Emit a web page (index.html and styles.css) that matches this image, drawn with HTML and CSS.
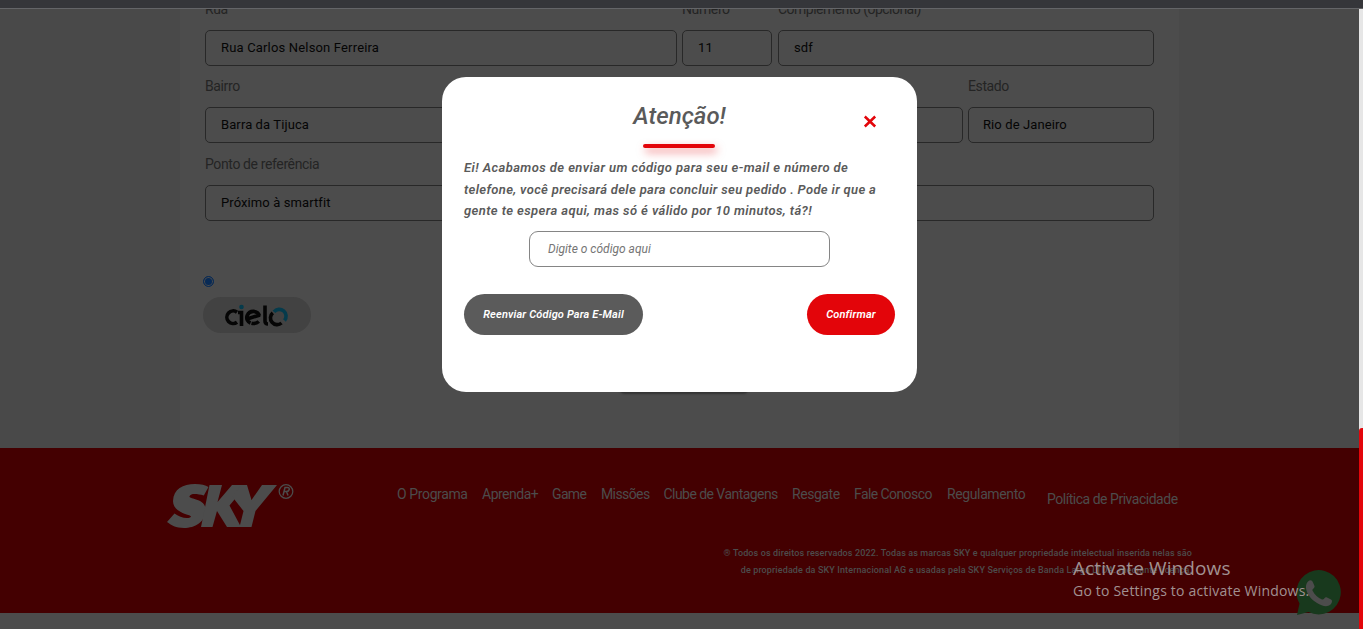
FILE: index.html
```html
<!DOCTYPE html>
<html lang="pt-BR">
<head>
<meta charset="utf-8">
<title>SKY</title>
<link rel="stylesheet" href="styles.css">
</head>
<body>
<div class="topbar"></div>
<div class="viewport">
  <div class="page">
    <main class="main">
      <form class="panel">
        <div class="row">
          <div class="field rua"><label class="label">Rua</label><div class="input">Rua Carlos Nelson Ferreira</div></div>
          <div class="field numero"><label class="label">Número</label><div class="input">11</div></div>
          <div class="field complemento"><label class="label">Complemento (opcional)</label><div class="input">sdf</div></div>
        </div>
        <div class="row">
          <div class="field bairro"><label class="label">Bairro</label><div class="input">Barra da Tijuca</div></div>
          <div class="field cidade"><div class="input"></div></div>
          <div class="field estado"><label class="label">Estado</label><div class="input">Rio de Janeiro</div></div>
        </div>
        <div class="row last">
          <div class="field ponto"><label class="label">Ponto de referência</label><div class="input">Próximo à smartfit</div></div>
        </div>
        <div class="payment">
          <span class="radio"></span>
          <div class="cielo">
            <svg width="66" height="24" viewBox="0 0 66 24" fill="none" stroke="#050505" stroke-width="3.600">
              <path d="M14 8.200A6.300 6.300 0 1 0 14 18.200"/>
              <path d="M15 8.500H18.500V22"/>
              <circle cx="18.500" cy="3" r="2.300" fill="#053b4c" stroke="none"/>
              <path d="M36.500 11.800A6.600 6.600 0 0 0 24.300 11.200C22.700 15 25 18 27.500 19M24 15 37 11M28.500 19.300C32 20 34 19.200 35.800 17.500"/>
              <path d="M42 1.500V17C42 19.200 43 20 45 20"/>
              <path d="M49.800 8.800A6.300 6.300 0 0 0 58.500 19"/>
              <path d="M51 7.800A6.300 6.300 0 0 1 61.500 16.500" stroke="#053b4c"/>
            </svg>
          </div>
        </div>
        <div class="submit"></div>
      </form>
    </main>
    <footer class="footer">
      <svg class="logo" width="130" height="48" viewBox="0 0 130 48" fill="#4c4c4c">
        <path d="M41.500 4 36.800 12.500C30 10.800 24 10.200 22.500 13.200C21.500 16.500 39 15 38.700 27C38.500 39 28 45 17 45C9 45 4 42 0 39L7.500 30.500C12 34 19 36 23 34.500C29 31.500 6 32 6 18C6.500 6 16 1 28 1C34 1 38.500 2.300 41.500 4Z"/>
        <path d="M42.500 2H55L50.500 19 65 2H79.500L62.500 22.500 74 44H60L50 28 45.500 44H34Z"/>
        <path d="M80 2 84.500 17 95 2H110L88.500 28 84.500 44H72.500L76.500 28 65.500 14 74 2Z"/>
        <circle cx="119" cy="8.500" r="6.800" fill="none" stroke="#4c4c4c" stroke-width="1.300"/>
        <path d="M116 12.500 118 4.500H120.500C123.500 4.500 122.500 8.500 119.500 8.500H117M119.500 8.500 121 12.500" fill="none" stroke="#4c4c4c" stroke-width="1.500"/>
      </svg>
      <div class="foot-right">
        <nav class="nav">
          <a class="n1">O Programa</a><a class="n2">Aprenda+</a><a class="n3">Game</a><a class="n4">Missões</a><a class="n5">Clube de Vantagens</a><a class="n6">Resgate</a><a class="n7">Fale Conosco</a><a class="n8">Regulamento</a><a class="n9">Política de Privacidade</a>
        </nav>
        <p class="legal">® Todos os direitos reservados 2022. Todas as marcas SKY e qualquer propriedade intelectual inserida nelas são<br>de propriedade da SKY Internacional AG e usadas pela SKY Serviços de Banda Larga LTDA. mediante licença.</p>
      </div>
    </footer>
  </div>
  <div class="scrollbar"><div class="thumb"></div></div>
</div>

<section class="modal">
  <h2 class="title">Atenção!</h2>
  <svg class="close" width="14" height="14" viewBox="0 0 14 14"><path d="M1.800 1.500 12.200 11.500M12.200 1.500 1.800 11.500" stroke="#e3050a" stroke-width="2.500"/></svg>
  <div class="rule"></div>
  <p class="message"><span class="m1">Ei! Acabamos de enviar um código para seu e-mail e número de</span><br><span class="m2">telefone, você precisará dele para concluir seu pedido . Pode ir que a</span><br><span class="m3">gente te espera aqui, mas só é válido por 10 minutos, tá?!</span></p>
  <div class="code">Digite o código aqui</div>
  <div class="actions"><button class="btn resend">Reenviar Código Para E-Mail</button><button class="btn confirm">Confirmar</button></div>
</section>

<svg class="whatsapp" width="46" height="46" viewBox="0 0 46 46">
  <path d="M1 45 3.500 33.500A22.200 22.200 0 1 1 12.500 42Z" fill="#18391d"/>
  <path d="M12 11.500C14 9.500 16 10 17 12.500L18.500 16C19.200 18 15.800 19 16.500 20.500C18.500 24.500 22 28 26 29.500C28 30.300 28.500 26.500 31 27.500L35 29.500C36.800 30.500 36 33 34.500 34.500C31 37.500 26 36 21 33C15 29.500 10.500 23.500 10 18C9.700 15.500 10.500 13 12 11.500Z" fill="#4c4c4c"/>
</svg>
<div class="activate"><div class="act-title">Activate Windows</div><div class="act-sub">Go to Settings to activate Windows.</div></div>
</body>
</html>
```
FILE: styles.css
```css
* { box-sizing: border-box; }
body { margin: 0; width: 1363px; height: 629px; overflow: hidden; background: #4c4c4c; font-family: Roboto, "Liberation Sans", sans-serif; position: relative; }
.topbar { height: 9px; background: #35363a; border-bottom: 1px solid #646568; }
.viewport { display: flex; height: 620px; }
.page { flex: 1; }
.scrollbar { width: 4px; background: #e6e6e6; padding-top: 419px; }
.thumb { height: 201px; background: #e3050a; border-top-left-radius: 3px; }
.main { height: 439px; overflow: hidden; background: #494949; padding-left: 180px; }
.panel { width: 999px; height: 460px; margin-top: -20px; background: #4c4c4c; padding: 0 25px; }
.row { display: flex; gap: 5px; align-items: flex-end; width: 949px; height: 77px; }
.row.last { height: 78px; }
.label { display: block; height: 41px; line-height: 40px; font-size: 14px; letter-spacing: -.38px; color: #242424; white-space: nowrap; }
.complemento .label { letter-spacing: -.52px; }
.input { height: 36px; border: 1px solid #282828; border-radius: 5px; padding-left: 15px; line-height: 33px; font-size: 13px; letter-spacing: .1px; color: #050505; white-space: nowrap; }
.rua { width: 472px; }
.rua .input { letter-spacing: .17px; }
.numero { width: 90px; }
.complemento { width: 376px; margin-left: 1px; }
.bairro { width: 372px; }
.cidade { width: 381px; }
.estado { width: 186px; }
.estado .input { padding-left: 14px; }
.ponto { width: 949px; }
.payment { padding-top: 55px; margin-left: -2px; display: flex; flex-direction: column; gap: 10px; }
.radio { width: 11px; height: 11px; border: 1px solid #082a55; border-radius: 50%; background: #082a55; box-shadow: inset 0 0 0 1px #4c4c4c; }
.cielo { width: 108px; height: 36px; border-radius: 18px; background: #424242; display: flex; align-items: center; padding: 1px 0 0 20px; }
.submit { width: 130px; height: 36px; border-radius: 6px; margin: 24px 0 0 414px; background: #353535; box-shadow: 0 1px 2px #333; }
.footer { height: 165px; background: #440001; display: flex; padding: 35px 0 0 167px; }
.logo { flex: none; }
.foot-right { width: 895px; padding-left: 100px; color: #4c4c4c; }
.nav { display: flex; gap: 14px; font-size: 14px; line-height: 23px; white-space: nowrap; }
.nav a { flex: none; }
.nav .n1 { width: 71px; letter-spacing: -.38px; }
.nav .n2 { width: 56px; letter-spacing: -.5px; }
.nav .n3 { width: 35px; letter-spacing: -.65px; }
.nav .n4 { width: 48.5px; letter-spacing: -.6px; }
.nav .n5 { width: 114.5px; letter-spacing: -.55px; }
.nav .n6 { width: 48px; letter-spacing: -.45px; }
.nav .n7 { width: 79px; letter-spacing: -.58px; }
.nav .n8 { width: 79px; letter-spacing: -.38px; }
.nav .n9 { margin: 5px 0 0 7px; width: 131px; letter-spacing: -.48px; }
.legal { margin: 34px 0 0; text-align: right; font-size: 9px; line-height: 17px; font-weight: 500; letter-spacing: .127px; white-space: nowrap; }
.modal { position: absolute; left: 442px; top: 77px; width: 475px; height: 315px; border-radius: 24px; background: #fff; padding: 22px 22px 0; font-style: italic; color: #5a5a5a; }
.title { margin: 0; height: 34px; line-height: 34px; font-size: 24px; font-weight: 500; text-align: center; }
.close { position: absolute; left: 421px; top: 38px; }
.rule { width: 72px; height: 4px; margin: 11px 0 0 179px; border-radius: 2px; background: #e3050a; box-shadow: 2px 4px 8px rgba(227, 5, 10, .5); }
.message { margin: 9px 0 0; font-size: 13px; line-height: 21.5px; font-weight: 600; white-space: nowrap; }
.m1 { letter-spacing: .42px; }
.m2 { letter-spacing: .34px; }
.m3 { letter-spacing: .4px; }
.code { width: 301px; height: 36px; margin: 9.5px 0 0 65px; border: 1px solid #858585; border-radius: 9px; padding-left: 18px; line-height: 34px; font-size: 12px; color: #757575; }
.actions { display: flex; justify-content: space-between; margin-top: 27px; }
.btn { height: 41px; border: 0; border-radius: 21px; padding: 0; font: italic 600 11px Roboto, sans-serif; letter-spacing: .16px; color: #fff; white-space: nowrap; }
.resend { width: 179px; background: #5b5b5b; }
.confirm { width: 88px; background: #e3050a; }
.whatsapp { position: absolute; left: 1296px; top: 570px; }
.activate { position: absolute; left: 1073px; top: 556px; font-family: "Open Sans", "Noto Sans", sans-serif; color: #a19191; white-space: nowrap; }
.act-title { font-size: 19px; line-height: 24px; letter-spacing: .1px; }
.act-sub { font-size: 14px; line-height: 22px; letter-spacing: .2px; }
```
